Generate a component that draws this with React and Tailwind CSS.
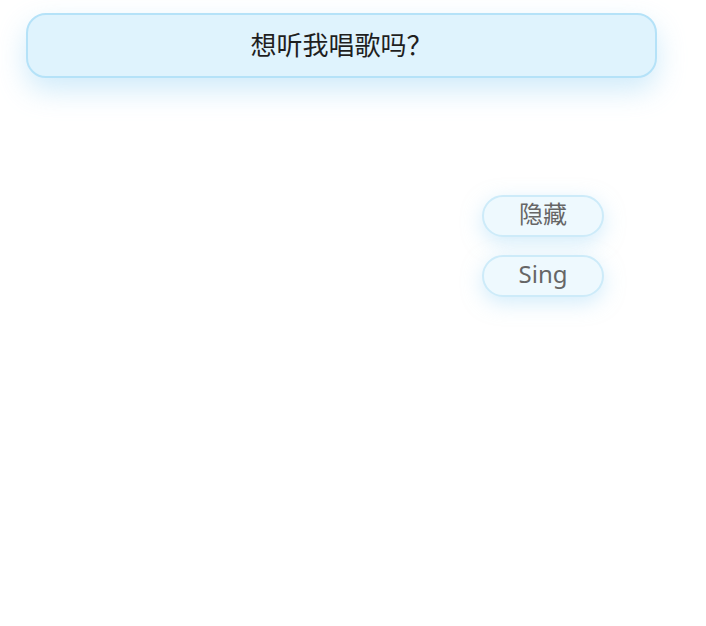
export default function App() {
  const font = { fontFamily: '"Noto Sans", "Noto Sans CJK SC", sans-serif' };
  return (
    <div className="w-[706px] h-[626px] bg-white flex flex-col" style={font}>
      <div className="ml-[26px] mt-[13px] w-[631px] h-[65px] rounded-[20px] border-2 border-[#b5e2f8] bg-[#dff3fd] shadow-[0_12px_28px_rgba(150,210,245,0.45)] flex items-center justify-center pb-[2px]">
        <span className="text-[26px] text-[#1f1f1f] leading-none">想听我唱歌吗？</span>
      </div>
      <div className="ml-[482px] mt-[117px] flex flex-col gap-[18px]">
        <button className="w-[122px] h-[42px] rounded-full border-2 border-[#cdebf9] bg-[#eef9fe] shadow-[0_6px_20px_rgba(170,220,248,0.5)] flex items-center justify-center pb-[5px] text-[24px] text-[#666] leading-none">
          隐藏
        </button>
        <button className="w-[122px] h-[42px] rounded-full border-2 border-[#cdebf9] bg-[#eef9fe] shadow-[0_6px_20px_rgba(170,220,248,0.5)] flex items-center justify-center pb-[5px] text-[24px] text-[#666] leading-none">
          Sing
        </button>
      </div>
    </div>
  );
}
